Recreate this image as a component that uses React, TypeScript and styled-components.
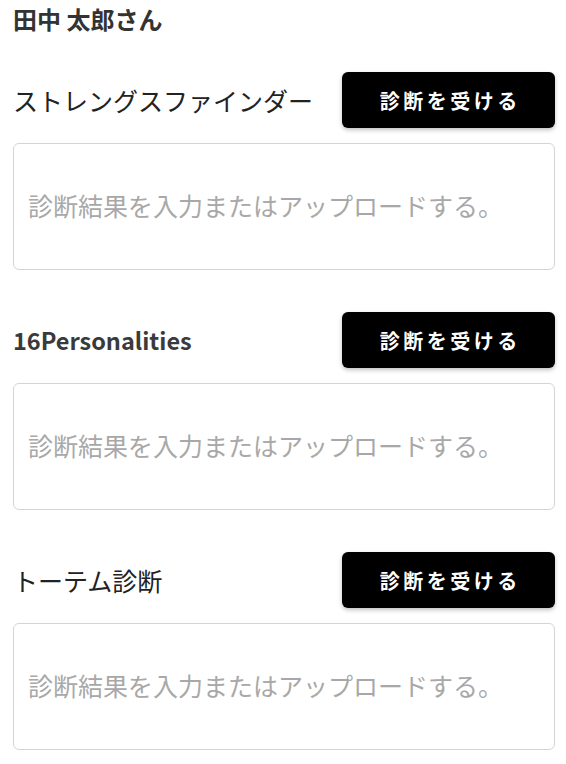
import React from 'react';
import styled, { createGlobalStyle } from 'styled-components';

const tests = [
  { name: 'ストレングスファインダー', latin: false },
  { name: '16Personalities', latin: true },
  { name: 'トーテム診断', latin: false },
];

const GlobalStyle = createGlobalStyle`
  body {
    margin: 0;
    background: #ffffff;
    font-family: "Noto Sans CJK JP", "Noto Sans", sans-serif;
  }
`;

const Page = styled.main`
  padding: 0 11px 0 13px;
`;

const UserName = styled.h1`
  margin: 0;
  padding-top: 4px;
  height: 57px;
  font-size: 24px;
  line-height: 30px;
  font-weight: 700;
  color: #333333;
`;

const TestList = styled.div`
  display: flex;
  flex-direction: column;
  gap: 42px;
  padding-top: 11px;
`;

const TestBlock = styled.section`
  display: flex;
  flex-direction: column;
  gap: 15px;
`;

const TestHeader = styled.div`
  display: flex;
  align-items: center;
  justify-content: space-between;
`;

const TestName = styled.h2<{ $latin: boolean }>`
  margin: 0;
  font-size: ${p => (p.$latin ? '23.5px' : '25px')};
  font-weight: ${p => (p.$latin ? 700 : 400)};
  color: ${p => (p.$latin ? '#3a3a3a' : '#222222')};
  line-height: 32px;
`;

const TakeButton = styled.button`
  width: 213px;
  height: 56px;
  border: none;
  border-radius: 6px;
  background: #000000;
  color: #ffffff;
  font-family: inherit;
  font-size: 20px;
  font-weight: 700;
  letter-spacing: 3.5px;
  padding: 0 0 0 3.5px;
  box-shadow: 0 2px 4px rgba(0, 0, 0, 0.25);
  cursor: pointer;
`;

const ResultInput = styled.textarea`
  box-sizing: border-box;
  width: 100%;
  height: 127px;
  margin: 0;
  padding: 46px 14px 0;
  border: 1px solid #d4d4d4;
  border-radius: 6px;
  resize: none;
  font-family: inherit;
  font-size: 25px;
  line-height: 30px;
  color: #222222;
  outline: none;

  &::placeholder {
    color: #a8a8a8;
  }
`;

const App: React.FC = () => {
  return (
    <>
      <GlobalStyle />
      <Page>
        <UserName>田中 太郎さん</UserName>
        <TestList>
          {tests.map((test, index) => (
            <TestBlock key={index}>
              <TestHeader>
                <TestName $latin={test.latin}>{test.name}</TestName>
                <TakeButton>診断を受ける</TakeButton>
              </TestHeader>
              <ResultInput placeholder="診断結果を入力またはアップロードする。" />
            </TestBlock>
          ))}
        </TestList>
      </Page>
    </>
  );
};

export default App;
